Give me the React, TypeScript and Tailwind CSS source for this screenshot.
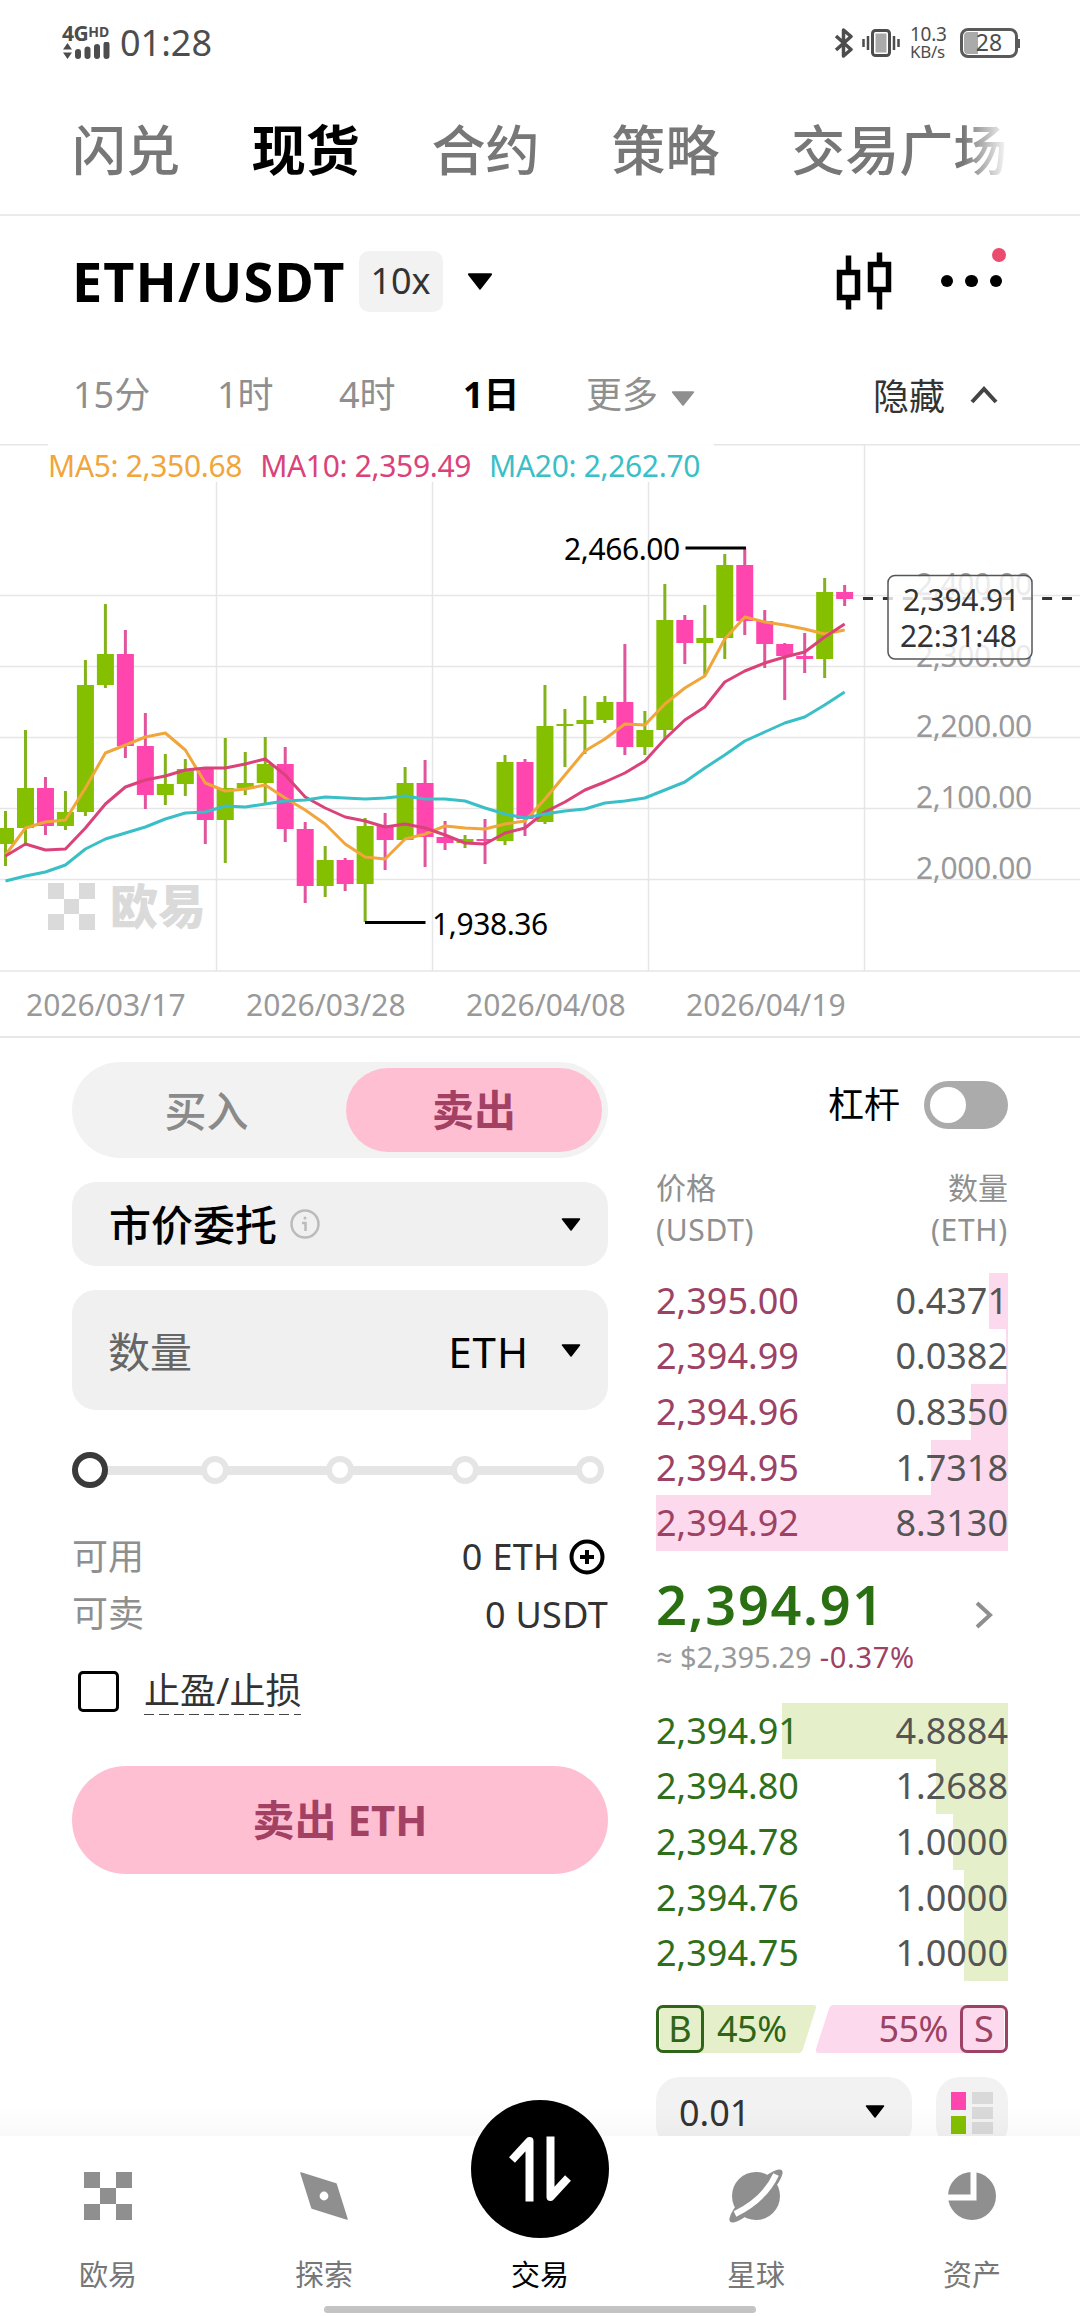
import clsx from 'clsx'

type Candle = [high: number, top: number, bottom: number, low: number, up: 0 | 1]

// y values of each daily candle in chart space, one candle every 20px
const candles: Candle[] = [
    [811, 828, 844, 866, 1], [730, 788, 828, 846, 1], [777, 788, 826, 835, 0], [791, 812, 826, 830, 1],
    [660, 685, 812, 816, 1], [604, 654, 685, 688, 1], [630, 654, 746, 758, 0], [713, 746, 795, 809, 0],
    [754, 784, 795, 805, 1], [759, 769, 784, 796, 1], [768, 768, 820, 844, 0], [738, 788, 820, 863, 1],
    [752, 783, 788, 795, 1], [737, 764, 783, 805, 1], [747, 764, 829, 842, 0], [822, 829, 886, 903, 0],
    [846, 860, 886, 897, 1], [858, 860, 884, 891, 0], [818, 826, 884, 922, 1], [813, 826, 840, 870, 0],
    [767, 783, 840, 840, 1], [760, 783, 837, 867, 0], [821, 837, 843, 850, 0], [835, 839, 843, 848, 1],
    [819, 839, 841, 864, 0], [755, 762, 841, 845, 1], [759, 762, 819, 836, 0], [685, 726, 822, 824, 1],
    [709, 724, 726, 767, 1], [696, 720, 724, 754, 1], [696, 702, 720, 723, 1], [644, 702, 747, 755, 0],
    [711, 730, 747, 755, 1], [584, 620, 730, 739, 1], [615, 620, 643, 664, 0], [605, 638, 643, 675, 1],
    [554, 565, 638, 659, 1], [548, 565, 621, 635, 0], [610, 621, 644, 668, 0], [643, 644, 656, 700, 0],
    [633, 656, 659, 673, 0], [578, 592, 659, 678, 1], [585, 592, 599, 606, 0],
]

const ma5 = [855, 828, 822, 820, 788, 753, 745, 737, 733, 750, 783, 791, 789, 785, 798, 810, 824, 844, 857, 859, 839, 834, 826, 828, 829, 824, 821, 799, 775, 751, 739, 724, 725, 704, 688, 676, 639, 617, 622, 625, 629, 634, 630]
const ma10 = [856, 844, 850, 849, 828, 804, 787, 780, 776, 770, 768, 768, 764, 759, 775, 797, 808, 817, 821, 827, 824, 828, 835, 843, 844, 833, 828, 812, 802, 790, 782, 773, 761, 739, 720, 707, 682, 671, 663, 657, 652, 637, 624]
const ma20 = [881, 876, 872, 865, 849, 839, 833, 827, 819, 813, 812, 806, 807, 804, 801, 800, 797, 798, 799, 798, 796, 799, 799, 801, 808, 814, 818, 814, 811, 809, 803, 801, 798, 790, 782, 768, 755, 741, 732, 723, 717, 705, 692]

const asks = [
    { price: '2,395.00', amount: '0.4371', bar: 19 },
    { price: '2,394.99', amount: '0.0382', bar: 2 },
    { price: '2,394.96', amount: '0.8350', bar: 37 },
    { price: '2,394.95', amount: '1.7318', bar: 77 },
    { price: '2,394.92', amount: '8.3130', bar: 352 },
]

const bids = [
    { price: '2,394.91', amount: '4.8884', bar: 226 },
    { price: '2,394.80', amount: '1.2688', bar: 72 },
    { price: '2,394.78', amount: '1.0000', bar: 55 },
    { price: '2,394.76', amount: '1.0000', bar: 44 },
    { price: '2,394.75', amount: '1.0000', bar: 44 },
]

const cx = (i: number) => 5.5 + i * 19.98
const toPoints = (ys: number[]) => ys.map((y, i) => `${cx(i)},${y}`).join(' ')

function Triangle({ className }: { className?: string }) {
    return (
        <svg viewBox="0 0 20 13" className={className} preserveAspectRatio="none">
            <path d="M1.5 1h17L10 12z" fill="currentColor" stroke="currentColor" strokeWidth="1.5" strokeLinejoin="round" />
        </svg>
    )
}

function StatusBar() {
    return (
        <div className="flex h-[85px] shrink-0 items-center justify-between pr-[62px] pl-[62px] text-[#4d4d4d]">
            <div className="flex items-center">
                <div className="flex w-[50px] flex-col">
                    <div className="flex h-[17px] items-start leading-[17px] font-bold">
                        <span className="text-[21px] tracking-[-0.5px]">4G</span>
                        <span className="text-[14px] leading-[13px]">HD</span>
                    </div>
                    <svg viewBox="0 0 50 18" className="h-[18px] w-[50px]">
                        <path d="M1 7.500L5.500 1 10 7.500zM1 10.500L5.500 17 10 10.500z" fill="currentColor" />
                        <path d="M16 10v4M25.500 7.500v6.500M35 5v9M44.500 2.500v11.500" stroke="currentColor" strokeWidth="6" strokeLinecap="round" />
                    </svg>
                </div>
                <span className="ml-[8px] text-[36px] leading-[40px]">01:28</span>
            </div>
            <div className="flex items-center">
                <svg viewBox="0 0 20 30" className="h-[30px] w-[20px]" fill="none" stroke="currentColor" strokeWidth="3.500">
                    <path d="M2 8l15 13.500-7.500 6.500V2L17 8.500 2 22" strokeLinejoin="round" />
                </svg>
                <svg viewBox="0 0 38 30" className="ml-[8px] h-[30px] w-[38px]" fill="none" stroke="currentColor">
                    <rect x="10.500" y="2.500" width="17" height="25" rx="3" strokeWidth="3" />
                    <rect x="13.500" y="5.500" width="11" height="19" fill="#aaa" stroke="none" />
                    <path d="M6 8v14M32 8v14M1.500 11v8M36.500 11v8" strokeWidth="2.500" />
                </svg>
                <div className="ml-[10px] w-[38px] text-[19px] leading-[17px] tracking-[-0.3px]">
                    <div>10.3</div>
                    <div className="text-[17px]">KB/s</div>
                </div>
                <div className="relative ml-[12px] flex h-[30px] w-[58px] items-center justify-center rounded-[8px] border-[3px] border-[#5a5a5a] text-[23px] leading-none">
                    <span className="absolute top-px bottom-px left-px w-[14px] rounded-l-[4px] bg-[#aaa]" />
                    <span className="relative">28</span>
                    <span className="absolute top-[8px] -right-[5px] h-[9px] w-[2px] bg-[#5a5a5a]" />
                </div>
            </div>
        </div>
    )
}

function Tabs() {
    const tabs = ['闪兑', '现货', '合约', '策略', '交易广场']
    return (
        <div className="flex h-[131px] shrink-0 items-center border-b-2 border-[#ebebeb] px-[72px]">
            <div className="relative flex gap-[71.800px] pt-px text-[54px] leading-[64px] whitespace-nowrap">
                {tabs.map((t) => (
                    <span key={t} className={t === '现货' ? 'font-bold text-black' : 'font-medium text-[#777]'}>
                        {t}
                    </span>
                ))}
                <span className="absolute top-0 -right-[2px] h-full w-[46px] bg-linear-to-r from-white/0 to-white" />
            </div>
        </div>
    )
}

function PairHeader() {
    return (
        <div className="flex h-[130px] shrink-0 items-center px-[72px]">
            <span className="text-[54px] leading-[60px] font-bold tracking-[1.100px]">ETH/USDT</span>
            <span className="ml-[13px] flex h-[61px] w-[84px] items-center justify-center rounded-[10px] bg-[#f2f2f2] text-[36px] text-[#333]">
                10x
            </span>
            <Triangle className="ml-[24px] h-[17px] w-[26px]" />
            <svg viewBox="0 0 56 60" className="ml-auto h-[60px] w-[56px]" fill="none" stroke="#000" strokeWidth="5.500">
                <path d="M3.500 21.500h18v25h-18zM12.500 4.500v17M12.500 46.500v12M34.500 13.500h18v25h-18zM43.500 1.500v12M43.500 38.500v20" />
            </svg>
            <div className="relative ml-[49px] flex items-center gap-[12px] pr-[6px]">
                <span className="size-[12.500px] rounded-full bg-black" />
                <span className="size-[12.500px] rounded-full bg-black" />
                <span className="size-[12.500px] rounded-full bg-black" />
                <span className="absolute -top-[27px] right-[2px] size-[14px] rounded-full bg-[#eb4b6d]" />
            </div>
        </div>
    )
}

function Timeframes() {
    return (
        <div className="flex h-[98px] shrink-0 items-center px-[73px] text-[36px] leading-[40px] text-[#8f8f8f]">
            <span className="w-[144px]">15分</span>
            <span className="w-[122px]">1时</span>
            <span className="w-[124px]">4时</span>
            <span className="w-[123px] font-bold text-black">1日</span>
            <span>更多</span>
            <Triangle className="mt-[6px] ml-[13px] h-[15px] w-[24px]" />
            <span className="mt-[4px] ml-auto text-[#333]">隐藏</span>
            <svg viewBox="0 0 28 18" className="mr-[9px] ml-[25px] h-[18px] w-[28px]" fill="none" stroke="#444" strokeWidth="4">
                <path d="M2 16L14 3l12 13" />
            </svg>
        </div>
    )
}

function Chart() {
    return (
        <div className="relative h-[528px] shrink-0">
            <svg viewBox="0 444 1080 528" className="h-[528px] w-[1080px]">
                <g stroke="#e6e6e6" strokeWidth="1.500">
                    {[444.8, 595.5, 666.5, 737.5, 808.5, 879.5, 971].map((y) => (
                        <line key={y} x1="0" x2="1080" y1={y} y2={y} />
                    ))}
                    {[216.5, 432.5, 648.5, 864.5].map((x) => (
                        <line key={x} x1={x} x2={x} y1="444" y2="971" />
                    ))}
                </g>

                <g fill="#dadada">
                    <path d="M48 883h16v16H48zM79 883h16v16H79zM64 899h15v15H64zM48 914h16v16H48zM79 914h16v16H79z" />
                    <text x="110" y="924" className="text-[48px] font-black">欧易</text>
                </g>

                <g className="text-[30px] tracking-[-0.400px]" fill="#999">
                    <text x="916" y="595">2,400.00</text>
                    <text x="916" y="667">2,300.00</text>
                    <text x="916" y="737">2,200.00</text>
                    <text x="916" y="808">2,100.00</text>
                    <text x="916" y="879">2,000.00</text>
                </g>

                {candles.map(([high, top, bottom, low, up], i) => (
                    <g key={i}>
                        <rect x={cx(i) - 1.5} y={high} width="3" height={low - high} fill={up ? '#83b31c' : '#e0559d'} />
                        <rect x={cx(i) - 8.5} y={top} width="17" height={bottom - top} fill={up ? '#84bf00' : '#ff45ae'} />
                    </g>
                ))}

                <g fill="none" strokeWidth="3" strokeLinejoin="round">
                    <polyline points={toPoints(ma5)} stroke="#f0a63a" />
                    <polyline points={toPoints(ma10)} stroke="#d9437a" />
                    <polyline points={toPoints(ma20)} stroke="#3abfc7" />
                </g>

                <g stroke="#000" strokeWidth="3">
                    <line x1="685.500" x2="746" y1="548" y2="548" />
                    <line x1="365" x2="425.500" y1="922.500" y2="922.500" />
                </g>
                <g className="text-[30px] tracking-[-0.400px]" fill="#000">
                    <text x="564" y="560">2,466.00</text>
                    <text x="432" y="935">1,938.36</text>
                </g>

                <line x1="863" x2="1073" y1="598.500" y2="598.500" stroke="#333" strokeWidth="3" strokeDasharray="10 9.900" />
                <rect x="888" y="575.500" width="144" height="83.500" rx="7" fill="#fff" fillOpacity="0.800" stroke="#555" strokeWidth="1.500" />
                <g className="text-[30px] tracking-[-0.300px]" fill="#333">
                    <text x="903" y="611">2,394.91</text>
                    <text x="900" y="647">22:31:48</text>
                </g>
            </svg>

            <div className="absolute top-0 left-[48px] flex h-[38px] w-[666px] gap-[18px] bg-white/90 pt-[3px] text-[30px] leading-[37px] tracking-[-0.330px] whitespace-nowrap">
                <span className="text-[#f0a63a]">MA5: 2,350.68</span>
                <span className="text-[#d9437a]">MA10: 2,359.49</span>
                <span className="text-[#3abfc7]">MA20: 2,262.70</span>
            </div>
        </div>
    )
}

function OrderForm() {
    return (
        <div className="flex w-[536px] flex-col">
            <div className="flex h-[96px] shrink-0 rounded-full bg-[#f2f2f2] p-[6px] text-[42px]">
                <div className="flex flex-1 items-center justify-center pr-[11px] font-medium text-[#8a8a8a]">买入</div>
                <div className="flex w-[256px] items-center justify-center rounded-full bg-[#ffbfd3] pb-[2px] font-bold text-[#a34164]">卖出</div>
            </div>

            <div className="mt-6 flex h-[84px] shrink-0 items-center rounded-3xl bg-[#f0f0f0] pr-[27px] pl-[37px] text-[42px] font-medium">
                市价委托
                <svg viewBox="0 0 30 30" className="ml-[13px] size-[30px]" fill="none" stroke="#bbb" strokeWidth="2.500">
                    <circle cx="15" cy="15" r="13.500" />
                    <path d="M12 14h3.500v8" />
                    <circle cx="15" cy="9" r="1.500" fill="#bbb" stroke="none" />
                </svg>
                <Triangle className="ml-auto h-[13px] w-[20px]" />
            </div>

            <div className="mt-6 flex h-[120px] shrink-0 items-center rounded-3xl bg-[#f0f0f0] pr-[27px] pl-[36px] text-[42px] text-[#666]">
                <span className="mt-[2px]">数量</span>
                <span className="mt-[3px] mr-[32px] ml-auto tracking-[1px] text-black">ETH</span>
                <Triangle className="h-[13px] w-[20px] text-black" />
            </div>

            <div className="relative mt-[42px] flex h-[36px] shrink-0 items-center justify-between pr-[4px]">
                <span className="absolute right-[18px] left-[18px] h-[9px] bg-[#e5e5e5]" />
                <span className="relative size-[36px] rounded-full border-[6px] border-[#3a3a3a] bg-white" />
                <span className="relative -ml-[4px] size-[28px] rounded-full border-[6px] border-[#e5e5e5] bg-white" />
                <span className="relative size-[28px] rounded-full border-[6px] border-[#e5e5e5] bg-white" />
                <span className="relative size-[28px] rounded-full border-[6px] border-[#e5e5e5] bg-white" />
                <span className="relative size-[28px] rounded-full border-[6px] border-[#e5e5e5] bg-white" />
            </div>

            <div className="mt-10 flex h-[57px] shrink-0 items-center justify-between text-[36px]">
                <span className="text-[#8f8f8f]">可用</span>
                <span className="flex items-center tracking-[0.300px] text-[#333]">
                    0 ETH
                    <svg viewBox="0 0 36 36" className="mr-[3px] ml-[9px] size-[36px]" fill="none" stroke="#000" strokeWidth="4">
                        <circle cx="18" cy="18" r="15.500" />
                        <path d="M18 11v14M11 18h14" />
                    </svg>
                </span>
            </div>
            <div className="flex h-[57px] shrink-0 items-center justify-between text-[36px]">
                <span className="text-[#8f8f8f]">可卖</span>
                <span className="mt-[3px] tracking-[0.300px] text-[#333]">0 USDT</span>
            </div>

            <div className="mt-[29px] flex h-[40px] shrink-0 items-center pl-[6px] text-[36px] leading-[40px] text-[#333]">
                <span className="size-[41px] rounded-[5px] border-[3.500px] border-black" />
                <span className="relative ml-[25px]">
                    止盈/止损
                    <span className="absolute top-[43px] left-0 h-px w-full bg-[repeating-linear-gradient(90deg,#444_0_10px,transparent_10px_15px)]" />
                </span>
            </div>

            <button className="mt-[55px] h-[108px] shrink-0 rounded-full bg-[#ffbfd3] pb-[2px] text-[42px] font-bold text-[#a34164]">卖出 ETH</button>
        </div>
    )
}

function BookRows({ rows, side }: { rows: typeof asks; side: 'ask' | 'bid' }) {
    return (
        <div className="flex shrink-0 flex-col text-[36px]">
            {rows.map((r) => (
                <div key={r.price} className="relative flex h-[55.600px] shrink-0 items-center justify-between">
                    <span
                        className={clsx('absolute inset-y-0 right-0', side === 'ask' ? 'bg-[#fcd9ed]' : 'bg-[#e5f0cb]')}
                        style={{ width: r.bar }}
                    />
                    <span className={clsx('relative', side === 'ask' ? 'text-[#9c4264]' : 'text-[#2f6f1c]')}>{r.price}</span>
                    <span className="relative text-[#555]">{r.amount}</span>
                </div>
            ))}
        </div>
    )
}

function OrderBook() {
    return (
        <div className="flex w-[352px] flex-col">
            <div className="flex h-[86px] shrink-0 items-center justify-end text-[36px]">
                杠杆
                <span className="ml-[24px] flex h-[48px] w-[84px] items-center rounded-full bg-[#ababab] pl-[6px]">
                    <span className="size-[36px] rounded-full bg-white" />
                </span>
            </div>

            <div className="mt-[19px] mb-[22px] flex shrink-0 justify-between text-[30px] leading-[42px] text-[#8f8f8f]">
                <div>价格<br /><span className="tracking-[0.700px]">(USDT)</span></div>
                <div className="text-right">数量<br /><span className="tracking-[0.700px]">(ETH)</span></div>
            </div>

            <BookRows rows={asks} side="ask" />

            <div className="flex h-[152px] shrink-0 items-center justify-between">
                <div className="whitespace-nowrap">
                    <div className="text-[54px] leading-[60px] font-semibold tracking-[1.700px] text-[#2a7012]">2,394.91</div>
                    <div className="flex text-[29px] leading-[46px] text-[#999]">
                        <span className="w-[24px] font-['Roboto']">≈</span>
                        <span>$2,395.29</span>
                        <span className="ml-[8px] tracking-[0.700px] text-[#9c4264]">-0.37%</span>
                    </div>
                </div>
                <svg viewBox="0 0 18 28" className="mr-[15px] -mt-[24px] h-[28px] w-[18px]" fill="none" stroke="#8f8f8f" strokeWidth="4">
                    <path d="M2 2l13 12L2 26" />
                </svg>
            </div>

            <BookRows rows={bids} side="bid" />

            <div className="relative mt-6 flex h-[48px] shrink-0 items-center justify-between text-[36px] leading-none">
                <svg viewBox="0 0 352 48" className="absolute inset-0 h-[48px] w-[352px]">
                    <path d="M4 0h153q4 0 3 3l-13 41q-1 4-5 4H4z" fill="#e5f0cb" />
                    <path d="M348 0H178q-4 0-5 4l-13 40q-1 4 3 4h185z" fill="#fcd9ed" />
                </svg>
                <div className="relative flex items-center text-[#2f6518]">
                    <span className="flex size-[48px] items-center justify-center rounded-[7px] border-[3px] border-[#2f6518]">B</span>
                    <span className="ml-[13px] tracking-[-0.500px]">45%</span>
                </div>
                <div className="relative flex items-center text-[#9c4264]">
                    <span className="mr-[12px] tracking-[-0.500px]">55%</span>
                    <span className="flex size-[48px] items-center justify-center rounded-[7px] border-[3px] border-[#9c4264]">S</span>
                </div>
            </div>

            <div className="mt-6 flex shrink-0 justify-between">
                <div className="flex h-[72px] w-[256px] items-center justify-between rounded-3xl bg-[#f2f2f2] pr-[27px] pl-[23px] text-[36px] text-[#333]">
                    0.01
                    <Triangle className="mb-[2px] h-[13px] w-[20px] text-black" />
                </div>
                <div className="flex h-[72px] w-[72px] items-center justify-center rounded-3xl bg-[#f2f2f2]">
                    <svg viewBox="0 0 42 42" className="size-[42px]">
                        <path d="M0 0h15v18H0z" fill="#ff45ae" />
                        <path d="M0 24h15v18H0z" fill="#84bf00" />
                        <path d="M21 0h21v12H21zM21 15h21v12H21zM21 30h21v12H21z" fill="#d9d9d9" />
                    </svg>
                </div>
            </div>
        </div>
    )
}

function NavItem({ label, children, active }: { label: string; children: React.ReactNode; active?: boolean }) {
    return (
        <div className="flex flex-1 flex-col items-center">
            <div className="flex h-[120px] items-center justify-center">{children}</div>
            <span className={clsx('text-[29px] leading-[38px]', active ? 'text-black' : 'text-[#777]')}>{label}</span>
        </div>
    )
}

function BottomNav() {
    return (
        <nav className="relative flex h-[180px] shrink-0 bg-white">
            <NavItem label="欧易">
                <svg viewBox="0 0 48 48" className="size-[48px]" fill="#8f8f8f">
                    <path d="M0 0h16v16H0zM32 0h16v16H32zM16 16h16v16H16zM0 32h16v16H0zM32 32h16v16H32z" />
                </svg>
            </NavItem>
            <NavItem label="探索">
                <svg viewBox="0 0 48 48" className="size-[48px]">
                    <path d="M1 1l35 11 11 35-35-11z" fill="#8f8f8f" stroke="#8f8f8f" strokeWidth="1.500" strokeLinejoin="round" />
                    <circle cx="24" cy="24" r="4.400" fill="#fff" />
                </svg>
            </NavItem>
            <NavItem label="交易" active>
                <div className="-mt-[54px] flex size-[138px] items-center justify-center rounded-full bg-black">
                    <svg viewBox="0 0 64 68" className="h-[68px] w-[64px]" fill="none" stroke="#fff" strokeWidth="8" strokeLinejoin="round">
                        <path d="M21.500 66.500V6L4 25" />
                        <path d="M42.500 1.500V62L60 43" />
                    </svg>
                </div>
            </NavItem>
            <NavItem label="星球">
                <svg viewBox="0 0 54 54" className="size-[54px]">
                    <circle cx="27" cy="27" r="24" fill="#8f8f8f" />
                    <ellipse cx="27" cy="27" rx="36.500" ry="9" fill="#8f8f8f" transform="rotate(-45 27 27)" />
                    <path d="M47 5.500Q36 30 6 45" fill="none" stroke="#fff" strokeWidth="6" />
                </svg>
            </NavItem>
            <NavItem label="资产">
                <svg viewBox="0 0 48 48" className="size-[48px]">
                    <circle cx="24" cy="24" r="24" fill="#8f8f8f" />
                    <path d="M25.500 0v25.500H0" fill="none" stroke="#fff" strokeWidth="6" />
                </svg>
            </NavItem>
            <span className="absolute bottom-[3px] left-[324px] h-[7px] w-[432px] rounded-full bg-[#c4c4c4]" />
        </nav>
    )
}

export default function App() {
    return (
        <div className="flex h-[2316px] w-[1080px] flex-col overflow-hidden bg-white font-['Noto_Sans','Noto_Sans_CJK_SC',sans-serif] text-black">
            <StatusBar />
            <Tabs />
            <PairHeader />
            <Timeframes />
            <Chart />
            <div className="flex h-[66px] shrink-0 items-center gap-[60px] border-b-2 border-[#e8e8e8] pl-[26px] text-[30px] text-[#999]">
                {['2026/03/17', '2026/03/28', '2026/04/08', '2026/04/19'].map((d) => (
                    <span key={d} className="w-[160px]">{d}</span>
                ))}
            </div>
            <main className="relative flex min-h-0 flex-1 gap-[48px] overflow-hidden px-[72px] pt-6">
                <OrderForm />
                <OrderBook />
                <span className="absolute inset-x-0 bottom-0 h-[28px] bg-linear-to-b from-black/0 to-black/[0.025]" />
            </main>
            <BottomNav />
        </div>
    )
}
